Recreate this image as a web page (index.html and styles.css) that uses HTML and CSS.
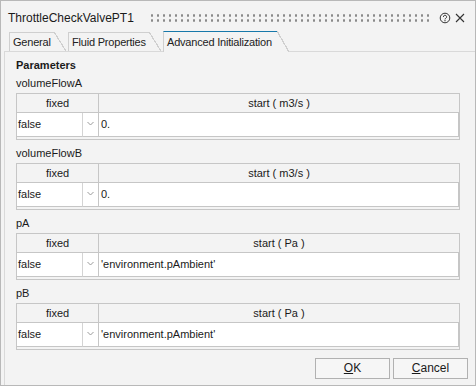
FILE: index.html
```html
<!DOCTYPE html>
<html>
<head>
<meta charset="utf-8">
<title>ThrottleCheckValvePT1</title>
<link rel="stylesheet" href="styles.css">
</head>
<body>
<div class="dlg">
  <div class="titlebar">
    <span class="title">ThrottleCheckValvePT1</span>
    <span class="grip"></span>
    <svg class="help" width="12" height="12" viewBox="0 0 12 12"><circle cx="6" cy="6" r="4.8" fill="none" stroke="#333" stroke-width="1"/><path d="M4.4 4.9a1.6 1.6 0 1 1 2.3 1.4c-.5.3-.7.5-.7 1.1" fill="none" stroke="#333" stroke-width="1"/><circle cx="6" cy="8.7" r=".65" fill="#333"/></svg>
    <svg class="close" width="10" height="10" viewBox="0 0 10 10"><path d="M1 1L9 9M9 1L1 9" stroke="#333" stroke-width="1.1"/></svg>
  </div>

  <div class="tabs">
    <div class="tab t1">General</div>
    <div class="tab t2">Fluid Properties</div>
    <div class="tab t3 on">Advanced Initialization</div>
  </div>

  <div class="panel">
    <div class="ptitle">Parameters</div>

    <div class="group">
      <div class="glabel">volumeFlowA</div>
      <div class="frame">
        <div class="fhead"><div class="c1">fixed</div><div class="c2">start ( m3/s )</div></div>
        <div class="frow">
          <div class="cv">false</div>
          <div class="arrow"><svg width="7" height="5" viewBox="0 0 7 5"><path d="M.5 1L3.5 4L6.5 1" fill="none" stroke="#9a9a9a" stroke-width="1"/></svg></div>
          <div class="val">0.</div>
        </div>
      </div>
    </div>

    <div class="group">
      <div class="glabel">volumeFlowB</div>
      <div class="frame">
        <div class="fhead"><div class="c1">fixed</div><div class="c2">start ( m3/s )</div></div>
        <div class="frow">
          <div class="cv">false</div>
          <div class="arrow"><svg width="7" height="5" viewBox="0 0 7 5"><path d="M.5 1L3.5 4L6.5 1" fill="none" stroke="#9a9a9a" stroke-width="1"/></svg></div>
          <div class="val">0.</div>
        </div>
      </div>
    </div>

    <div class="group">
      <div class="glabel">pA</div>
      <div class="frame">
        <div class="fhead"><div class="c1">fixed</div><div class="c2">start ( Pa )</div></div>
        <div class="frow">
          <div class="cv">false</div>
          <div class="arrow"><svg width="7" height="5" viewBox="0 0 7 5"><path d="M.5 1L3.5 4L6.5 1" fill="none" stroke="#9a9a9a" stroke-width="1"/></svg></div>
          <div class="val">'environment.pAmbient'</div>
        </div>
      </div>
    </div>

    <div class="group">
      <div class="glabel">pB</div>
      <div class="frame">
        <div class="fhead"><div class="c1">fixed</div><div class="c2">start ( Pa )</div></div>
        <div class="frow">
          <div class="cv">false</div>
          <div class="arrow"><svg width="7" height="5" viewBox="0 0 7 5"><path d="M.5 1L3.5 4L6.5 1" fill="none" stroke="#9a9a9a" stroke-width="1"/></svg></div>
          <div class="val">'environment.pAmbient'</div>
        </div>
      </div>
    </div>

    <div class="btns">
      <div class="btn"><u>O</u>K</div>
      <div class="btn"><u>C</u>ancel</div>
    </div>
  </div>
</div>
</body>
</html>
```
FILE: styles.css
```css
body {margin: 0; font-family: "Liberation Sans", Arial, sans-serif; font-size: 11px; color: #1a1a1a;}

.dlg {width: 476px; height: 386px; box-sizing: border-box; border: 1px solid #b8b8b8; background: #f3f3f3; display: flex; flex-direction: column;}

/* title bar */
.titlebar {display: flex; align-items: center; height: 30px; box-sizing: border-box; padding: 4px 10px 0 7px;}
.title {font-size: 12px;}
.grip {flex: 1; height: 10px; margin: 0 9px 0 15px; background-image: radial-gradient(circle at center, #8a8a8a 1px, transparent 1.4px); background-size: 6px 5px;}
.help {margin-right: 4px;}

/* tabs */
.tabs {display: flex; align-items: flex-end; height: 21px; box-sizing: border-box; margin-left: 3px; padding-left: 5px; border-bottom: 1px solid #d9d9d9;}
.tab {position: relative; box-sizing: border-box; height: 19px; border-top: 1px solid #cfcfcf; border-left: 1px solid #cfcfcf; padding: 2px 0 0 3px; margin-right: 14px; line-height: 15px; letter-spacing: -0.2px; white-space: nowrap; color: #222;}
.tab::after {content: ""; position: absolute; top: -1px; bottom: 0; left: 100%; width: 12px;
  background: linear-gradient(to top right, transparent calc(50% - 0.6px), #cfcfcf calc(50% - 0.6px), #cfcfcf calc(50% + 0.6px), transparent calc(50% + 0.6px));}
.t1 {width: 45px;}
.t2 {width: 81px;}
.t3 {width: 114px;}
.tab.on {height: 21px; margin-bottom: -1px; padding-top: 3px; border-top-color: #1778aa; background: #f3f3f3;}
.tab.on::after {background: linear-gradient(to top right, #f3f3f3 calc(50% - 0.6px), #cfcfcf calc(50% - 0.6px), #cfcfcf calc(50% + 0.6px), transparent calc(50% + 0.6px));}

/* panel */
.panel {flex: 1; margin-left: 3px; border-left: 1px solid #d9d9d9; padding: 6px 7px 0 11px;}
.ptitle {font-weight: bold; line-height: 14px; margin-bottom: 4px;}
.group + .group {margin-top: 6px;}
.glabel {line-height: 14px;}

.frame {margin-top: 3px; width: 444px; box-sizing: border-box; border: 1px solid #c6c6c6; padding-bottom: 2px;}
.fhead {display: flex; height: 19px; box-sizing: border-box; border-bottom: 1px solid #c6c6c6; line-height: 18px; text-align: center;}
.fhead .c1 {width: 81px; border-right: 1px solid #c6c6c6;}
.fhead .c2 {flex: 1;}

.frow {display: flex; height: 24px; line-height: 23px;}
.frow > div {box-sizing: border-box; background: white; border-bottom: 1px solid #c6c6c6;}
.cv {width: 66px; padding-left: 1px; border-right: 1px solid #d4d4d4;}
.arrow {width: 15px; display: flex; align-items: center; justify-content: center; padding-bottom: 2px;}
.val {flex: 1; padding-left: 2px; border-left: 1px solid #c6c6c6; border-right: 1px solid #c6c6c6;}

/* buttons */
.btns {display: flex; justify-content: flex-end; gap: 3px; margin-top: 8px;}
.btn {width: 75px; height: 21px; box-sizing: border-box; border: 1px solid #b1b1b1; background: #f6f6f6; text-align: center; line-height: 19px; font-size: 12px;}
```
